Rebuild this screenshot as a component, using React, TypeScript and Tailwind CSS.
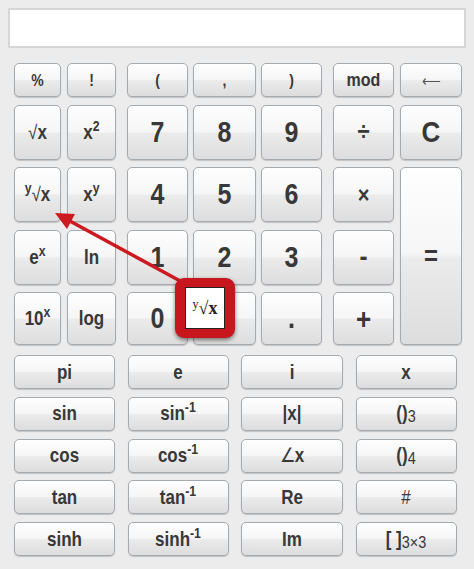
import type { ReactNode } from "react"

function Key({
  children,
  className = "",
  size = "text-[17px]",
}: {
  children?: ReactNode
  className?: string
  size?: string
}) {
  return (
    <button
      className={`flex items-center justify-center rounded-[5px] border border-[#a3aab0] bg-[linear-gradient(to_bottom,#fefefe_0%,#f6f6f6_48%,#ebebeb_52%,#dddddd_100%)] font-bold text-[#383838] shadow-[0_1px_1px_rgba(0,0,0,0.18),inset_0_1px_0_#ffffff] ${size} ${className}`}
    >
      <span className="inline-block scale-y-115 leading-none">{children}</span>
    </button>
  )
}

function Sup({ children }: { children: ReactNode }) {
  return <sup className="relative -top-[0.55em] text-[0.72em]">{children}</sup>
}

function Sub({ children }: { children: ReactNode }) {
  return (
    <sub className="relative top-[0.15em] text-[0.85em] font-normal">{children}</sub>
  )
}

export default function App() {
  const bottom: ReactNode[] = [
    "pi",
    "e",
    "i",
    "x",
    "sin",
    <>
      sin<Sup>-1</Sup>
    </>,
    "|x|",
    <>
      ()<Sub>3</Sub>
    </>,
    "cos",
    <>
      cos<Sup>-1</Sup>
    </>,
    <>
      <span className="font-normal">∠</span>x
    </>,
    <>
      ()<Sub>4</Sub>
    </>,
    "tan",
    <>
      tan<Sup>-1</Sup>
    </>,
    "Re",
    <span className="font-normal">#</span>,
    "sinh",
    <>
      sinh<Sup>-1</Sup>
    </>,
    "Im",
    <>
      [ ]<Sub>3×3</Sub>
    </>,
  ]

  return (
    <div className="relative h-[569px] w-[474px] overflow-hidden bg-[#ececec] font-['Liberation_Sans',Arial,sans-serif]">
      <div className="px-2 pt-2">
        <div className="h-10 w-[458px] border-2 border-[#d6d6d6] bg-white" />
      </div>

      <div className="mt-[15px] flex gap-[11px] pl-[14px]">
        <div className="grid grid-cols-[47px_49px] grid-rows-[34px_55px_55px_55px_53px] gap-x-[6px] gap-y-[7.5px]">
          <Key size="text-[14px]">%</Key>
          <Key size="text-[14px]">!</Key>
          <Key>
            <span className="font-normal">√</span>x
          </Key>
          <Key>
            x<Sup>2</Sup>
          </Key>
          <Key>
            <Sup>y</Sup>
            <span className="font-normal">√</span>x
          </Key>
          <Key>
            x<Sup>y</Sup>
          </Key>
          <Key>
            e<Sup>x</Sup>
          </Key>
          <Key>ln</Key>
          <Key>
            10<Sup>x</Sup>
          </Key>
          <Key>log</Key>
        </div>

        <div className="grid grid-cols-[61px_63px_61px] grid-rows-[34px_55px_55px_55px_53px] gap-x-[5px] gap-y-[7.5px]">
          <Key size="text-[14px]">(</Key>
          <Key size="text-[14px]">,</Key>
          <Key size="text-[14px]">)</Key>
          <Key size="text-[25px]">7</Key>
          <Key size="text-[25px]">8</Key>
          <Key size="text-[25px]">9</Key>
          <Key size="text-[25px]">4</Key>
          <Key size="text-[25px]">5</Key>
          <Key size="text-[25px]">6</Key>
          <Key size="text-[25px]">1</Key>
          <Key size="text-[25px]">2</Key>
          <Key size="text-[25px]">3</Key>
          <Key size="text-[25px]">0</Key>
          <Key size="text-[25px]" />
          <Key size="text-[25px]">.</Key>
        </div>

        <div className="grid grid-cols-[61px_62px] grid-rows-[34px_55px_55px_55px_53px] gap-x-[6px] gap-y-[7.5px]">
          <Key size="text-[16px]">mod</Key>
          <Key size="text-[13px]">
            <span className="font-normal text-[#555]">⟵</span>
          </Key>
          <Key size="text-[22px]">÷</Key>
          <Key size="text-[26px]">C</Key>
          <Key size="text-[20px]">×</Key>
          <Key size="text-[24px]" className="row-span-3">
            =
          </Key>
          <Key size="text-[24px]">-</Key>
          <Key size="text-[26px]">+</Key>
        </div>
      </div>

      <div className="mt-[10px] grid grid-cols-[101px_101px_102px_101px] gap-x-[12.5px] gap-y-[7.75px] pl-[14px]">
        {bottom.map((label, i) => (
          <Key key={i} className="h-[34px]">
            {label}
          </Key>
        ))}
      </div>

      <svg
        className="pointer-events-none absolute left-0 top-0"
        width="474"
        height="569"
        viewBox="0 0 474 569"
      >
        <line
          x1="182"
          y1="282"
          x2="68"
          y2="220"
          stroke="#cc1a20"
          strokeWidth="3.5"
        />
        <polygon points="55,213 75,214 67,229" fill="#cc1a20" />
      </svg>

      <div className="absolute left-[175px] top-[278px] flex h-[60px] w-[60px] items-center justify-center rounded-[9px] bg-[#c8161e] shadow-[0_2px_4px_rgba(0,0,0,0.5)]">
        <div className="flex h-[42px] w-[40px] items-center justify-center border border-[#222] bg-white font-['Liberation_Serif',serif] text-[18px] text-[#222]">
          <span className="relative -top-[4px] text-[12px]">y</span>
          <span>√</span>
          <span className="font-bold">x</span>
        </div>
      </div>
    </div>
  )
}
